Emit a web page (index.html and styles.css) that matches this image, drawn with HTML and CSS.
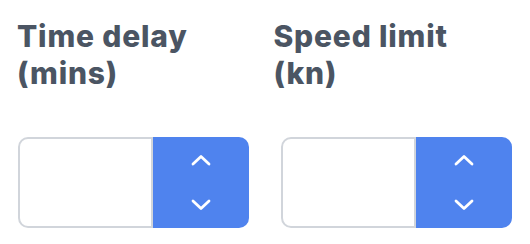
FILE: index.html
```html
<!DOCTYPE html>
<html lang="en">
<head>
    <meta charset="UTF-8">
    <title>Voyage settings</title>
    <link rel="stylesheet" href="styles.css">
</head>
<body>
    <div class="fields">
        <div class="field">
            <label class="field-label" for="timeDelay">Time delay<br>(mins)</label>
            <div class="stepper">
                <input type="text" id="timeDelay" class="stepper-input">
                <div class="stepper-buttons">
                    <button class="stepper-btn" type="button">
                        <svg width="20" height="12" viewBox="0 0 20 12"><path d="M2 10 L10 2.5 L18 10" fill="none" stroke="#fff" stroke-width="2.8" stroke-linecap="round" stroke-linejoin="round"/></svg>
                    </button>
                    <button class="stepper-btn" type="button">
                        <svg width="20" height="12" viewBox="0 0 20 12"><path d="M2 2 L10 9.5 L18 2" fill="none" stroke="#fff" stroke-width="2.8" stroke-linecap="round" stroke-linejoin="round"/></svg>
                    </button>
                </div>
            </div>
        </div>
        <div class="field field-second">
            <label class="field-label" for="speedLimit">Speed limit<br>(kn)</label>
            <div class="stepper">
                <input type="text" id="speedLimit" class="stepper-input">
                <div class="stepper-buttons">
                    <button class="stepper-btn" type="button">
                        <svg width="20" height="12" viewBox="0 0 20 12"><path d="M2 10 L10 2.5 L18 10" fill="none" stroke="#fff" stroke-width="2.8" stroke-linecap="round" stroke-linejoin="round"/></svg>
                    </button>
                    <button class="stepper-btn" type="button">
                        <svg width="20" height="12" viewBox="0 0 20 12"><path d="M2 2 L10 9.5 L18 2" fill="none" stroke="#fff" stroke-width="2.8" stroke-linecap="round" stroke-linejoin="round"/></svg>
                    </button>
                </div>
            </div>
        </div>
    </div>
</body>
</html>
```

FILE: styles.css
```css
body {
    margin: 0;
    padding: 0;
    background-color: #fff;
    font-family: Inter, "Liberation Sans", sans-serif;
}

.fields {
    display: flex;
    padding: 18px 0 0 17px;
}

.field {
    width: 258px;
}

.field-label {
    display: block;
    color: #4b5563;
    font-size: 30px;
    font-weight: 800;
    letter-spacing: 0.8px;
    line-height: 37px;
    height: 119px;
}

.stepper {
    display: flex;
    width: 231px;
    height: 91px;
    margin-left: 1px;
}

.field-second .stepper {
    margin-left: 7px;
}

.stepper-input {
    width: 135px;
    box-sizing: border-box;
    border: 2px solid #d1d5db;
    border-radius: 10px 0 0 10px;
    padding: 0 10px;
    font-size: 20px;
    outline: none;
}

.stepper-buttons {
    flex: 1;
    display: flex;
    flex-direction: column;
    background-color: #4f83ee;
    border-radius: 0 10px 10px 0;
}

.stepper-btn {
    flex: 1;
    display: flex;
    align-items: center;
    justify-content: center;
    background: none;
    border: none;
    padding: 0;
    cursor: pointer;
}
```
